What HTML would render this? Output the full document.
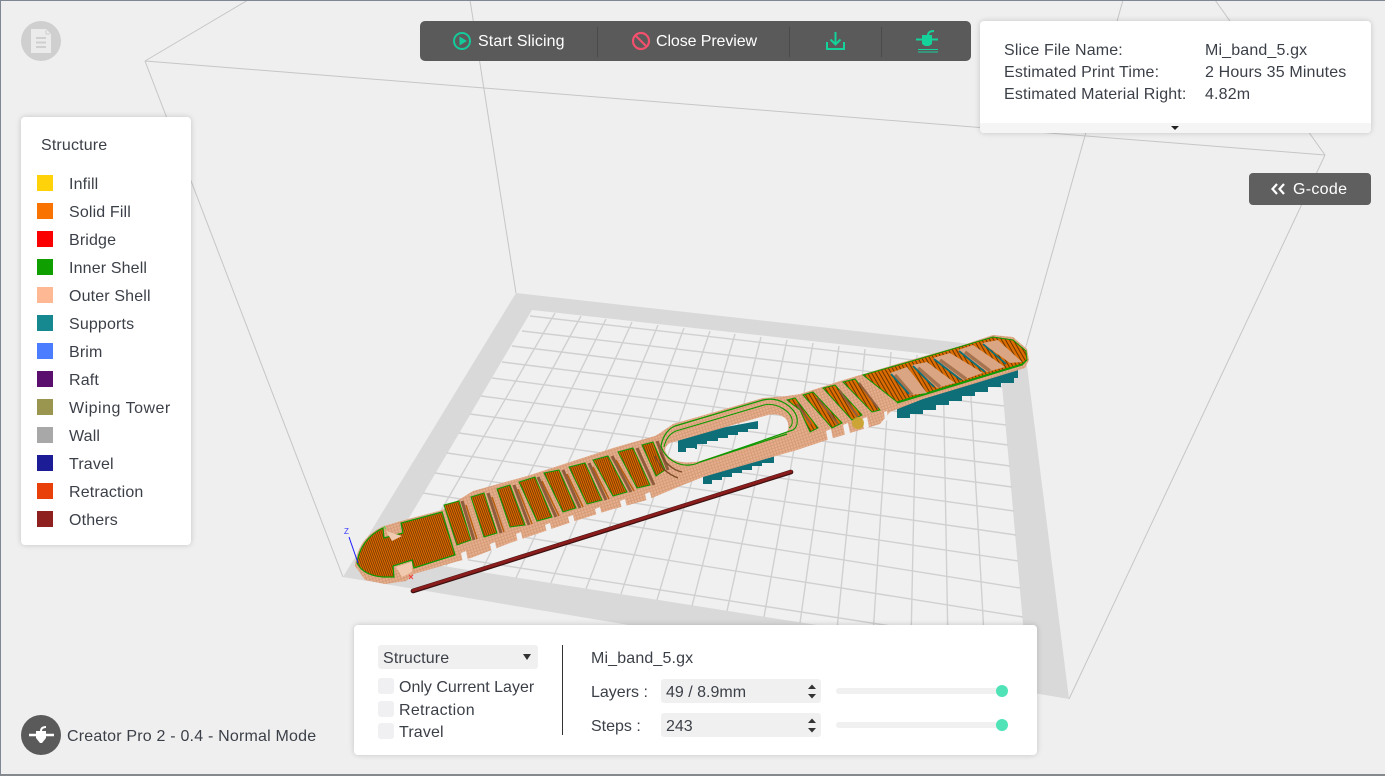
<!DOCTYPE html>
<html><head><meta charset="utf-8"><title>Preview</title>
<style>
html,body{margin:0;padding:0;background:#efefef}
#r{position:relative;width:1385px;height:776px;overflow:hidden;background:#efefef;font-family:"Liberation Sans","Noto Sans CJK SC",sans-serif;font-size:16px;color:#3b3f47}
#r svg.a{position:absolute;left:0;top:0}
.t{position:absolute;white-space:nowrap;line-height:20px;height:20px;letter-spacing:.15px;margin-top:2px}
.p{position:absolute;background:#fff;border-radius:4px;box-shadow:0 0 6px rgba(0,0,0,.18)}
.s{position:absolute;left:16px;width:16px;height:16px}
.b{position:absolute;background:#f0f0f0;border-radius:3px}
.w{color:#fff}
.c{position:absolute;left:378px;width:16px;height:16px;background:#f0f0f2;border-radius:3px}
</style></head><body><div id="r">
<svg class="a" width="1385" height="776" viewBox="0 0 1385 776">
<defs>
<pattern id="h1" width="2" height="2" patternUnits="userSpaceOnUse" patternTransform="rotate(-20)"><rect width="2" height="2" fill="#de6a00"/><rect width=".8" height="2" fill="#6a3400"/></pattern>
<pattern id="h2" width="3.4" height="3.4" patternUnits="userSpaceOnUse" patternTransform="rotate(-30)"><rect width="3.4" height="3.4" fill="#dc6c00"/><rect width=".9" height="3.4" fill="#5c3000"/></pattern>
<pattern id="tx" width="3" height="3" patternUnits="userSpaceOnUse" patternTransform="rotate(-18)"><rect width="3" height="3" fill="#e7af8d"/><path d="M0 2.500H3M1.500 0V2.500" stroke="#c98f6c" stroke-width=".6"/></pattern>
</defs>
<!-- wire box -->
<g stroke="#c6c6c6" stroke-width="1" fill="none">
<path d="M145 61L248 0M145 61L1325 155M145 61L343 577M1325 155L1069 699M1325 155L1215 0M516 293L470 0M1025 350L1123 0"/>
</g>
<!-- bed -->
<path d="M516 293L1025 350L1069 699L343 577Z" fill="#d9d9d9"/>
<path d="M532 310L1000 362L1026 658L386 557Z" fill="#f0f0f0"/>
<g stroke="#d0d0d0" stroke-width="1.400" fill="none">
<path d="M555 313L412 561M581 316L446 566M606 319L481 572M632 322L516 578M658 325L551 583M684 328L586 589M710 331L621 594M735 334L657 600M761 337L692 606M787 340L727 611M813 343L764 617M839 346L800 623M865 349L837 629M891 352L873 635M917 355L911 641M943 358L948 647M969 361L985 653"/>
<path d="M530 316L1001 370M522 331L1002 387M512 346L1004 406M502 362L1006 425M492 378L1008 445M481 396L1010 466M470 414L1012 487M459 433L1014 511M447 453L1016 535M435 473L1018 561M423 493L1020 588M410 519L1023 617M392 548L1025 647"/>
</g>
<!-- supports -->
<g fill="#0f6f78">
<path d="M703 470v14h9v-4h10v-3h10v-4h10v-3h10v-4h10v-3h12v-8z"/>
<path d="M678 436v16h8v-4h9v1h2v-5h10v-3h11v-3h10v-3h10v-3h10v-3h10v-8z"/>
<path d="M897 404v14h13v-4h13v-4h13v-5h13v-4h13v-5h13v-4h13v-5h13v-4h13v-5h4v-14z"/>
</g>
<!-- rod -->
<path d="M413 591L791 472" stroke="#3a1010" stroke-width="4.600" stroke-linecap="round"/>
<path d="M413 590.600L791 471.600" stroke="#8b1c1c" stroke-width="3" stroke-linecap="round"/>
<!-- body -->
<path fill="url(#tx)" fill-rule="evenodd" d="M355 566C357 545 368 533 384 526L401 521L442 510L473 491L527 476L567 463L613 448L655 436L660 433L673 424L763 398L787 396L800 394L822 387L840 381L860 375L907 361L960 346L993 335L1013 337L1027 349L1029 360L1025 368L973 384L923 399L890 412L880 424L853 432L837 437L827 440L797 450L703 477L683 485L647 500L610 510L572 522L510 543L471 558L455 562L414 574L406 581L385 584L365 580ZM665 450C666 446 668 444 670 443L768 415C778 413 786 416 788 423C789 428 788 432 785 433L700 461C688 464 668 463 665 450Z"/>
<!-- lower edge notches -->
<g fill="#f0f0f0">
<path d="M461 553l5-2 2 10-5 2z"/><path d="M490 544l5-2 2 9-5 2z"/><path d="M516 534l5-2 2 9-5 2z"/><path d="M545 525l5-2 2 8-5 2z"/><path d="M568 517l5-2 2 8-5 2z"/><path d="M595 509l5-2 2 8-5 2z"/><path d="M620 501l5-2 2 8-5 2z"/><path d="M645 494l5-2 2 9-5 2z"/>
<path d="M826 431l5-2 2 10-5 2z"/><path d="M843 425l5-2 2 10-5 2z"/><path d="M862 419l5-2 2 10-5 2z"/><path d="M884 412l3-1 1 9-3 1z"/>
</g>
<!-- head -->
<path d="M357 563C359 548 368 535 383 528L384 538L403 533L401 523L442 512L455 555L414 568L412 560L393 566L394 577L383 577C370 576 361 571 357 563Z" fill="url(#h1)" stroke="#0d9a00" stroke-width="1.200"/>
<path d="M386 531L402 536L392 541Z" fill="#f0c9ae"/>
<path d="M396 567L412 562L412 572L402 577Z" fill="#f0c9ae"/>
<!-- walls -->
<path d="M462 501L474 540M488 493L501 533M514 485L529 525M538 477L556 517M563 470L580 508M589 463L606 500M612 456L631 492M637 448L654 485M657 441L668 470" stroke="#8f5c3c" stroke-width="3" fill="none"/>
<path d="M466 505L477 539M492 497L504 532M518 489L532 524M542 481L559 516M567 474L583 507M593 467L609 499M616 460L634 491" stroke="#b85f10" stroke-width="1.500" fill="none"/>
<!-- stripes -->
<g fill="url(#h1)" stroke="#0d9a00" stroke-width="1">
<path d="M444 505L459 501L471 540L457 545Z"/><path d="M471 497L484 493L497 533L484 537Z"/><path d="M497 489L510 485L525 525L510 527Z"/><path d="M519 482L535 477L552 517L537 521Z"/><path d="M544 473L559 470L576 508L563 512Z"/><path d="M569 467L585 463L602 500L587 504Z"/><path d="M593 460L608 456L627 492L613 496Z"/><path d="M618 452L633 448L650 485L637 488Z"/><path d="M642 445L653 442L665 470L656 476Z"/>
</g>
<!-- swirl zone -->
<path d="M660 452C664 462 672 470 682 472M655 456C660 468 668 474 678 478" stroke="#7a4a28" stroke-width="1.400" fill="none"/>
<!-- ring -->
<path d="M661 446C663 434 670 428 675 426L763 400C780 396 795 408 797 418C798 425 796 428 793 430L700 462C685 470 666 462 661 446Z" fill="none" stroke="#0d9a00" stroke-width="1.200"/>
<path d="M664 447C666 438 671 433 676 431L764 405C776 402 790 411 792 419C793 424 791 427 789 428" fill="none" stroke="#0d9a00" stroke-width="1"/>
<path d="M700 462L787 434" stroke="#0d9a00" stroke-width="1.200"/>
<!-- right stripes -->
<g fill="url(#h2)" stroke="#0d9a00" stroke-width="1">
<path d="M787 400L795 398L818 428L810 432L800 410Z"/><path d="M803 395L813 392L842 423L832 428Z"/><path d="M823 388L835 385L862 415L852 420Z"/><path d="M843 382L855 379L880 410L872 412Z"/>
<path d="M863 375L905 363L993 337L1013 340L1026 351L1027 360L1022 364L897 402Z"/>
</g>
<path d="M797 404L811 424M817 398L838 424M839 390L858 417M859 383L878 408" stroke="#8f5c3c" stroke-width="2" fill="none"/>
<!-- windows -->
<g fill="#d9a582">
<path d="M890 373L907 367L927 393L912 395Z"/><path d="M912 365L927 362L955 383L937 388Z"/><path d="M933 358L950 353L983 373L963 380Z"/><path d="M958 350L973 345L1005 367L987 372Z"/><path d="M982 343L998 340L1022 362L1010 363Z"/>
</g>
<path d="M895 375L912 395M918 368L940 387M940 360L966 379M965 352L990 371" stroke="#a87450" stroke-width="3.500" fill="none"/>
<path d="M891 374L909 394M913 366L934 387M934 359L961 380M959 351L985 372M983 344L1006 364" stroke="#0f6f78" stroke-width="1.800" fill="none"/>
<path d="M897 403L1022 365L1027 360" stroke="#0d9a00" stroke-width="1.200" fill="none"/>
<circle cx="858" cy="423" r="6" fill="#c8a428" opacity=".85"/>
<!-- axis -->
<path d="M349 537L358 563" stroke="#1a1aff" stroke-width="1"/>
<path d="M384 526l2 3" stroke="#40e040"/>
<path d="M409 575l4 4m0-4l-4 4" stroke="#f04040" stroke-width="1"/>
<text x="344" y="534" font-family="Liberation Sans" font-size="8" fill="#3a3aff">Z</text>
</svg>

<!-- window frame -->
<div style="position:absolute;left:0;top:0;width:1385px;height:1px;background:#7f8694"></div>
<div style="position:absolute;left:0;top:0;width:1px;height:776px;background:#7f8694"></div>
<div style="position:absolute;left:0;top:774px;width:1385px;height:2px;background:#85888d"></div>

<!-- doc icon -->
<svg class="a" width="80" height="80" viewBox="0 0 80 80">
<circle cx="41" cy="41" r="20" fill="#cfcfcf"/>
<path d="M31 29H46L51 34V53H31Z" fill="#ebebeb"/>
<path d="M46 30V34H50" stroke="#cfcfcf" fill="none"/>
<path d="M36 38H46M36 42.500H46M36 47H46" stroke="#cfcfcf" stroke-width="2"/>
</svg>

<!-- top bar -->
<div style="position:absolute;left:420px;top:21px;width:551px;height:40px;background:#5a5a5a;border-radius:5px"></div>
<svg class="a" width="1385" height="80" viewBox="0 0 1385 80">
<path d="M597.500 27V57M789.500 27V57M881.500 27V57" stroke="#4a4a4a"/>
<circle cx="462" cy="41" r="8" fill="none" stroke="#14c99a" stroke-width="2"/>
<path d="M459.500 36.500L467 41L459.500 45.500Z" fill="#14c99a"/>
<circle cx="641" cy="41" r="8" fill="none" stroke="#f2506c" stroke-width="2.200"/>
<path d="M635.500 35.500L646.500 46.500" stroke="#f2506c" stroke-width="2.200"/>
<path d="M835.500 32V44M830.500 39.500L835.500 44.500L840.500 39.500M827 42V49H844V42" fill="none" stroke="#14d39a" stroke-width="2"/>
<path d="M916 39.500H938" stroke="#14d39a" stroke-width="2"/>
<path d="M922 35H932V44L929 46H925L922 44Z" fill="#14d39a"/>
<path d="M928 35C928 32 931 31 934 31" fill="none" stroke="#14d39a" stroke-width="2"/>
<path d="M918 49.500H938M918 52H938" stroke="#14d39a" stroke-width="1"/>
</svg>
<div class="t w" style="left:478px;top:30px;letter-spacing:.1px">Start Slicing</div>
<div class="t w" style="left:656px;top:30px;letter-spacing:-.1px">Close Preview</div>

<!-- legend -->
<div class="p" style="left:21px;top:117px;width:170px;height:428px">
<div class="t" style="left:20px;top:17px">Structure</div>
<div class="s" style="top:58px;background:#ffd20a"></div><div class="t" style="left:48px;top:56px">Infill</div>
<div class="s" style="top:86px;background:#f97300"></div><div class="t" style="left:48px;top:84px">Solid Fill</div>
<div class="s" style="top:114px;background:#fb0000"></div><div class="t" style="left:48px;top:112px">Bridge</div>
<div class="s" style="top:142px;background:#0fa000"></div><div class="t" style="left:48px;top:140px">Inner Shell</div>
<div class="s" style="top:170px;background:#ffb894"></div><div class="t" style="left:48px;top:168px">Outer Shell</div>
<div class="s" style="top:198px;background:#168890"></div><div class="t" style="left:48px;top:196px">Supports</div>
<div class="s" style="top:226px;background:#4a7dff"></div><div class="t" style="left:48px;top:224px">Brim</div>
<div class="s" style="top:254px;background:#5a0f6e"></div><div class="t" style="left:48px;top:252px">Raft</div>
<div class="s" style="top:282px;background:#9a9650"></div><div class="t" style="left:48px;top:280px;letter-spacing:.5px">Wiping Tower</div>
<div class="s" style="top:310px;background:#a8a8a8"></div><div class="t" style="left:48px;top:308px">Wall</div>
<div class="s" style="top:338px;background:#1c1c96"></div><div class="t" style="left:48px;top:336px">Travel</div>
<div class="s" style="top:366px;background:#e84008"></div><div class="t" style="left:48px;top:364px">Retraction</div>
<div class="s" style="top:394px;background:#8e2020"></div><div class="t" style="left:48px;top:392px">Others</div>
</div>

<!-- info -->
<div class="p" style="left:980px;top:21px;width:391px;height:112px;overflow:hidden">
<div style="position:absolute;left:0;top:102px;width:391px;height:10px;background:#f5f5f5"></div>
<div style="position:absolute;left:191px;top:105px;width:0;height:0;border-left:4px solid transparent;border-right:4px solid transparent;border-top:4px solid #222"></div>
<div class="t" style="left:24px;top:18px">Slice File Name:</div><div class="t" style="left:225px;top:18px">Mi_band_5.gx</div>
<div class="t" style="left:24px;top:40px">Estimated Print Time:</div><div class="t" style="left:225px;top:40px">2 Hours 35 Minutes</div>
<div class="t" style="left:24px;top:62px">Estimated Material Right:</div><div class="t" style="left:225px;top:62px">4.82m</div>
</div>

<!-- gcode -->
<div style="position:absolute;left:1249px;top:173px;width:122px;height:32px;background:#5f5f5f;border-radius:4px"></div>
<svg class="a" width="1385" height="220" viewBox="0 0 1385 220"><path d="M1277 184L1272.500 189L1277 194M1284 184L1279.500 189L1284 194" fill="none" stroke="#fff" stroke-width="2.200"/></svg>
<div class="t w" style="left:1293px;top:178px;letter-spacing:.3px">G-code</div>

<!-- printer -->
<svg class="a" width="80" height="776" viewBox="0 0 80 776">
<circle cx="41" cy="735" r="20" fill="#5a5a5a"/>
<path d="M29 735H54" stroke="#fff" stroke-width="2.400"/>
<path d="M36 731H46V738L42 743H40L36 738Z" fill="#fff"/>
<path d="M41 731C41 728 43 727 46 727" fill="none" stroke="#fff" stroke-width="2"/>
</svg>
<div class="t" style="left:67px;top:725px;letter-spacing:.2px">Creator Pro 2 - 0.4 - Normal Mode</div>

<!-- bottom panel -->
<div class="p" style="left:354px;top:625px;width:683px;height:130px"></div>
<div class="b" style="left:378px;top:645px;width:160px;height:24px"></div>
<div class="t" style="left:383px;top:647px">Structure</div>
<div style="position:absolute;left:523px;top:654px;width:0;height:0;border-left:4px solid transparent;border-right:4px solid transparent;border-top:6px solid #333"></div>
<div class="c" style="top:678px"></div><div class="t" style="left:399px;top:676px;letter-spacing:0">Only Current Layer</div>
<div class="c" style="top:701px"></div><div class="t" style="left:399px;top:699px;letter-spacing:.3px">Retraction</div>
<div class="c" style="top:723px"></div><div class="t" style="left:399px;top:721px">Travel</div>
<div style="position:absolute;left:562px;top:645px;width:1px;height:90px;background:#333"></div>
<div class="t" style="left:591px;top:647px">Mi_band_5.gx</div>
<div class="t" style="left:591px;top:681px;letter-spacing:0">Layers :</div>
<div class="b" style="left:661px;top:679px;width:160px;height:24px"></div>
<div class="t" style="left:666px;top:681px;letter-spacing:0">49 / 8.9mm</div>
<div class="t" style="left:591px;top:715px;letter-spacing:0">Steps :</div>
<div class="b" style="left:661px;top:713px;width:160px;height:24px"></div>
<div class="t" style="left:666px;top:715px;letter-spacing:0">243</div>
<svg class="a" width="1385" height="776" viewBox="0 0 1385 776">
<path d="M812 684.500L816 689H808ZM808 694H816L812 698.500ZM812 718.500L816 723H808ZM808 728H816L812 732.500Z" fill="#333"/>
<rect x="836" y="688" width="172" height="6" rx="3" fill="#f0f0f0"/>
<rect x="836" y="722" width="172" height="6" rx="3" fill="#f0f0f0"/>
<circle cx="1002" cy="691" r="6" fill="#50e3b8"/>
<circle cx="1002" cy="725" r="6" fill="#50e3b8"/>
</svg>
</div></body></html>
